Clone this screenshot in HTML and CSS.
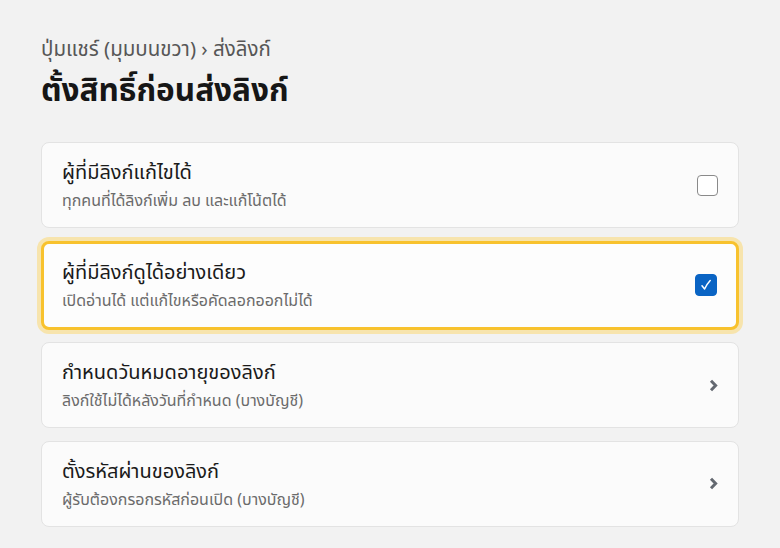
FILE: index.html
```html
<!DOCTYPE html>
<html lang="th">
<head>
<meta charset="utf-8">
<link rel="stylesheet" href="styles.css">
</head>
<body>
<main class="page">
  <div class="crumb">ปุ่มแชร์ (มุมบนขวา) › ส่งลิงก์</div>
  <h1 class="title">ตั้งสิทธิ์ก่อนส่งลิงก์</h1>
  <div class="list">
    <div class="card">
      <div class="text">
        <div class="name">ผู้ที่มีลิงก์แก้ไขได้</div>
        <div class="desc">ทุกคนที่ได้ลิงก์เพิ่ม ลบ และแก้โน้ตได้</div>
      </div>
      <span class="box"></span>
    </div>
    <div class="card selected">
      <div class="text">
        <div class="name">ผู้ที่มีลิงก์ดูได้อย่างเดียว</div>
        <div class="desc">เปิดอ่านได้ แต่แก้ไขหรือคัดลอกออกไม่ได้</div>
      </div>
      <span class="box checked"><svg width="14" height="14" viewBox="0 0 14 14"><path d="M3 7.8 L5.6 11 Q8 6 11.2 2.6" fill="none" stroke="#fff" stroke-width="1.5" stroke-linecap="round" stroke-linejoin="round"/></svg></span>
    </div>
    <div class="card">
      <div class="text">
        <div class="name">กำหนดวันหมดอายุของลิงก์</div>
        <div class="desc">ลิงก์ใช้ไม่ได้หลังวันที่กำหนด (บางบัญชี)</div>
      </div>
      <svg class="chev" width="11" height="13" viewBox="0 0 11 13"><path d="M3 1.8 L7.6 6.5 L3 11.2" fill="none" stroke="#636870" stroke-width="3"/></svg>
    </div>
    <div class="card">
      <div class="text">
        <div class="name">ตั้งรหัสผ่านของลิงก์</div>
        <div class="desc">ผู้รับต้องกรอกรหัสก่อนเปิด (บางบัญชี)</div>
      </div>
      <svg class="chev" width="11" height="13" viewBox="0 0 11 13"><path d="M3 1.8 L7.6 6.5 L3 11.2" fill="none" stroke="#636870" stroke-width="3"/></svg>
    </div>
  </div>
</main>
</body>
</html>
```
FILE: styles.css
```css
html, body { margin: 0; padding: 0; }
body {
  background: #f2f2f2;
  font-family: "Noto Sans Thai", "Noto Sans", sans-serif;
  color: #1a1a1a;
  width: 780px;
  height: 548px;
  overflow: hidden;
}
.page { padding: 36px 41px 0 41px; }
.crumb { font-size: 20.5px; color: #575757; line-height: 28px; }
.title { font-size: 31.5px; font-weight: 700; margin: 8px 0 30px; line-height: 40px; color: #161616; }
.list { display: flex; flex-direction: column; gap: 12.5px; }
.card {
  display: flex; align-items: center; justify-content: space-between;
  background: #fbfbfb;
  border: 1px solid #e3e3e3;
  border-radius: 8px;
  padding: 0 19px 0 20px;
  box-sizing: border-box;
  height: 86px;
}
.card.selected {
  border: 3px solid #f8c22d;
  box-shadow: 0 0 0 4px #f7e4ad;
  height: 89px;
  padding: 0 19px 0 18px;
  background: #fdfdfd;
}
.text { display: flex; flex-direction: column; margin-top: 1px; }
.name { font-size: 20px; line-height: 28px; color: #1a1a1a; }
.desc { font-size: 16px; line-height: 22px; color: #6b6b6b; margin-top: 3px; }
.box {
  width: 21px; height: 21px; box-sizing: border-box;
  border: 1.5px solid #8a8a8a; border-radius: 4px; background: #fff;
  display: flex; align-items: center; justify-content: center;
  margin-right: 1px;
}
.box.checked { background: #0a64c4; border-color: #0a64c4; width: 22px; height: 22px; margin-right: 0; }
```
